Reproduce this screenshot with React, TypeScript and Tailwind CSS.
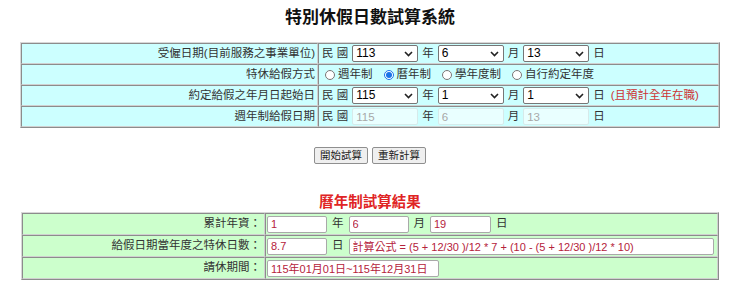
import React from "react";

const font = "font-['Liberation_Sans','Noto_Sans_CJK_TC',sans-serif]";

function Chevron() {
  return (
    <svg
      width="9"
      height="6"
      viewBox="0 0 9 6"
      className="pointer-events-none absolute right-[5px] top-[6px]"
    >
      <path d="M1 1 L4.5 4.5 L8 1" fill="none" stroke="#222" strokeWidth="1.6" />
    </svg>
  );
}

function Select({ value }: { value: string }) {
  return (
    <span className="relative inline-block">
      <select
        defaultValue={value}
        className="block h-[17px] w-[66px] appearance-none rounded-[2px] border border-[#767676] bg-white pl-[3px] text-[12px] leading-[15px] text-black"
      >
        <option value={value}>{value}</option>
      </select>
      <Chevron />
    </span>
  );
}

function Disabled({ value }: { value: string }) {
  return (
    <input
      disabled
      defaultValue={value}
      className="block h-[17px] w-[66px] rounded-[2px] border border-[#d6eaea] bg-[#e9ffff] pl-[3px] text-[11.5px] leading-[15px] text-[#a8a8a8]"
    />
  );
}

function Radio({ label, checked }: { label: string; checked?: boolean }) {
  return (
    <label className="mr-[11px] flex items-center">
      <input
        type="radio"
        name="mode"
        defaultChecked={checked}
        className="m-0 mr-[3px] h-[10px] w-[10px] accent-[#1a73e8]"
      />
      <span>{label}</span>
    </label>
  );
}

function ResultInput({ value, width }: { value: string; width: string }) {
  return (
    <input
      readOnly
      value={value}
      className={`block h-[17px] ${width} rounded-[2px] border border-[#a9a9a9] bg-white pl-[3px] text-[11px] leading-[15px] text-[#b5223b]`}
    />
  );
}

const topLabel =
  "h-[21px] w-[297px] border border-t-[#8c8c8c] border-l-[#8c8c8c] border-r-[#d0d0d0] border-b-[#d0d0d0] bg-[#ccffff] pr-[2px] text-right align-middle";
const topData =
  "h-[21px] border border-t-[#8c8c8c] border-l-[#8c8c8c] border-r-[#d0d0d0] border-b-[#d0d0d0] bg-[#ccffff] pl-[3px] align-middle";
const botLabel =
  "h-[22px] w-[243px] border border-t-[#8c8c8c] border-l-[#8c8c8c] border-r-[#d0d0d0] border-b-[#d0d0d0] bg-[#ccffcc] pr-[3px] text-right align-middle";
const botData =
  "h-[22px] border border-t-[#8c8c8c] border-l-[#8c8c8c] border-r-[#d0d0d0] border-b-[#d0d0d0] bg-[#ccffcc] pl-[1px] align-middle";

export default function App() {
  return (
    <div className={`${font} min-h-[297px] bg-white text-[11.5px] text-[#333]`}>
      <h1 className="pt-[6px] text-center text-[17px] font-bold leading-[24px] text-[#111]">
        特別休假日數試算系統
      </h1>

      <table className="mx-auto mt-[12px] w-[700px] border-separate border-spacing-0 border border-t-[#d8d8d8] border-l-[#d8d8d8] border-r-[#8c8c8c] border-b-[#8c8c8c]">
        <tbody>
          <tr>
            <td className={topLabel}>受僱日期(目前服務之事業單位)</td>
            <td className={topData}>
              <div className="flex items-center">
                <span className="mr-[4px]">民 國</span>
                <Select value="113" />
                <span className="mx-[4px]">年</span>
                <Select value="6" />
                <span className="mx-[4px]">月</span>
                <Select value="13" />
                <span className="ml-[4px]">日</span>
              </div>
            </td>
          </tr>
          <tr>
            <td className={topLabel}>特休給假方式</td>
            <td className={topData}>
              <div className="flex items-center pl-[3px]">
                <Radio label="週年制" />
                <Radio label="曆年制" checked />
                <Radio label="學年度制" />
                <Radio label="自行約定年度" />
              </div>
            </td>
          </tr>
          <tr>
            <td className={topLabel}>約定給假之年月日起始日</td>
            <td className={topData}>
              <div className="flex items-center">
                <span className="mr-[4px]">民 國</span>
                <Select value="115" />
                <span className="mx-[4px]">年</span>
                <Select value="1" />
                <span className="mx-[4px]">月</span>
                <Select value="1" />
                <span className="ml-[4px]">日</span>
                <span className="ml-[6px] text-[#cc3333]">(且預計全年在職)</span>
              </div>
            </td>
          </tr>
          <tr>
            <td className={topLabel}>週年制給假日期</td>
            <td className={topData}>
              <div className="flex items-center">
                <span className="mr-[4px]">民 國</span>
                <Disabled value="115" />
                <span className="mx-[4px]">年</span>
                <Disabled value="6" />
                <span className="mx-[4px]">月</span>
                <Disabled value="13" />
                <span className="ml-[4px]">日</span>
              </div>
            </td>
          </tr>
        </tbody>
      </table>

      <div className="mt-[19px] flex justify-center gap-[4px]">
        <button className="h-[17px] rounded-[2px] border border-[#8f8f8f] bg-[#efefef] px-[5px] text-[10.5px] leading-[15px] text-[#222]">
          開始試算
        </button>
        <button className="h-[17px] rounded-[2px] border border-[#8f8f8f] bg-[#efefef] px-[5px] text-[10.5px] leading-[15px] text-[#222]">
          重新計算
        </button>
      </div>

      <h2 className="mt-[29px] text-center text-[14.5px] font-bold leading-[19px] text-[#e02424]">
        曆年制試算結果
      </h2>

      <table className="mx-auto w-[698px] border-separate border-spacing-0 border border-t-[#d8d8d8] border-l-[#d8d8d8] border-r-[#8c8c8c] border-b-[#8c8c8c]">
        <tbody>
          <tr>
            <td className={botLabel}>累計年資：</td>
            <td className={botData}>
              <div className="flex items-center">
                <ResultInput value="1" width="w-[60px]" />
                <span className="mx-[5px]">年</span>
                <ResultInput value="6" width="w-[60px]" />
                <span className="mx-[5px]">月</span>
                <ResultInput value="19" width="w-[61px]" />
                <span className="ml-[5px]">日</span>
              </div>
            </td>
          </tr>
          <tr>
            <td className={botLabel}>給假日期當年度之特休日數：</td>
            <td className={botData}>
              <div className="flex items-center">
                <ResultInput value="8.7" width="w-[60px]" />
                <span className="mx-[5px]">日</span>
                <ResultInput
                  value="計算公式 = (5 + 12/30 )/12 * 7 + (10 - (5 + 12/30 )/12 * 10)"
                  width="w-[365px]"
                />
              </div>
            </td>
          </tr>
          <tr>
            <td className={botLabel}>請休期間：</td>
            <td className={botData}>
              <ResultInput value="115年01月01日~115年12月31日" width="w-[172px]" />
            </td>
          </tr>
        </tbody>
      </table>
    </div>
  );
}
